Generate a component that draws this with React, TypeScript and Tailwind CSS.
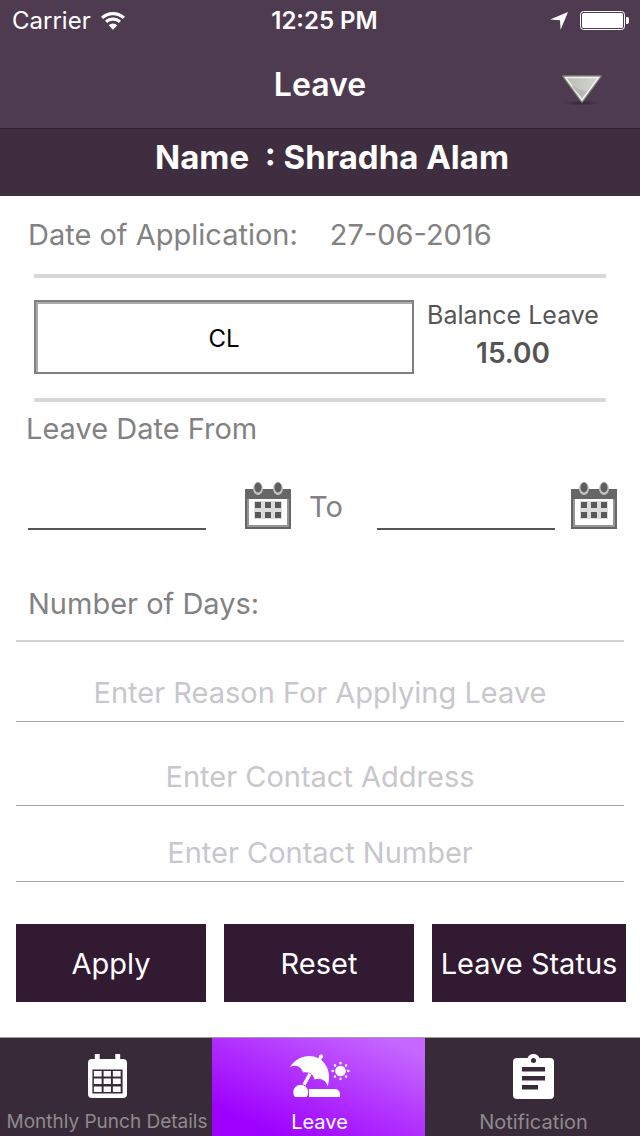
import type { ReactNode } from "react";

function WifiIcon() {
  return (
    <svg width="24" height="20" viewBox="0 0 24 20" aria-hidden="true">
      <path d="M12 1C7.300 1 3.200 2.800 0 5.800l2.200 2.300C4.900 5.600 8.200 4.200 12 4.200s7.100 1.400 9.800 3.900L24 5.800C20.800 2.800 16.700 1 12 1Z" fill="#fff" />
      <path d="M12 6.600c-3.100 0-5.900 1.200-8 3.200l2.200 2.300c1.500-1.500 3.500-2.300 5.800-2.300s4.300.8 5.800 2.300l2.200-2.300c-2.100-2-4.900-3.200-8-3.200Z" fill="#fff" />
      <path d="M12 18.800 7.700 14.300a6.200 6.200 0 0 1 8.600 0Z" fill="#fff" />
    </svg>
  );
}

function LocationIcon() {
  return (
    <svg width="18" height="18" viewBox="0 0 18 18" aria-hidden="true">
      <path d="M18 0 10.600 17.800 10 8.200 0 7.600Z" fill="#fff" />
    </svg>
  );
}

function BatteryIcon() {
  return (
    <svg width="49" height="19" viewBox="0 0 49 19" aria-hidden="true">
      <rect x=".5" y=".5" width="44" height="18" rx="3" fill="none" stroke="#fff" />
      <rect x="2" y="2" width="41" height="15" rx="1.500" fill="#fff" />
      <path d="M46 6h1a2 2 0 0 1 2 2v3a2 2 0 0 1-2 2h-1Z" fill="#fff" />
    </svg>
  );
}

function TriangleIcon() {
  return (
    <svg width="40" height="31" viewBox="0 0 40 31" aria-hidden="true">
      <defs>
        <linearGradient id="tri" x1="0" y1="0" x2="1" y2="0">
          <stop offset="0" stopColor="#b9bab6" />
          <stop offset="1" stopColor="#d6d7d3" />
        </linearGradient>
        <radialGradient id="shade">
          <stop offset="0" stopColor="#281c2a" stopOpacity=".75" />
          <stop offset="1" stopColor="#281c2a" stopOpacity="0" />
        </radialGradient>
      </defs>
      <ellipse cx="20" cy="28" rx="18" ry="2.500" fill="url(#shade)" />
      <path d="M.8 1h38.400L20 27.400Z" fill="url(#tri)" stroke="#7e8179" strokeWidth="1.400" strokeLinejoin="round" />
      <path d="M3.400 2.400h33.200L20 25Z" fill="none" stroke="#f1f2ee" strokeWidth="1.500" />
      <path d="M9 11c6 1 9 5 16 5l-5 7Z" fill="#adaeaa" opacity=".6" />
    </svg>
  );
}

function DatePickIcon() {
  return (
    <svg width="46" height="47" viewBox="0 0 46 47" aria-hidden="true">
      <path d="M0 7h46v40H0Z" fill="#666" />
      <path d="M2 17h42v28H2Z" fill="#959595" />
      <path d="M4 17h38v26H4Z" fill="#fff" />
      <ellipse cx="13" cy="6.500" rx="5" ry="6.500" fill="#c4c4c4" />
      <ellipse cx="33" cy="6.500" rx="5" ry="6.500" fill="#c4c4c4" />
      <ellipse cx="13" cy="5.500" rx="3.500" ry="5" fill="#5e5e5e" />
      <ellipse cx="33" cy="5.500" rx="3.500" ry="5" fill="#5e5e5e" />
      <path d="M9 19h28v18H9Z" fill="#dcdcdc" />
      <path d="M10 20h6v6h-6ZM20 20h6v6h-6ZM30 20h6v6h-6ZM10 30h6v6h-6ZM20 30h6v6h-6ZM30 30h6v6h-6Z" fill="#595959" />
    </svg>
  );
}

function PunchIcon() {
  return (
    <svg width="39" height="44" viewBox="0 0 40 44" preserveAspectRatio="none" aria-hidden="true">
      <path
        fill="#fff"
        fillRule="evenodd"
        d="M7 0h5v5h16V0h5v5h3a4 4 0 0 1 4 4v31a4 4 0 0 1-4 4H4a4 4 0 0 1-4-4V9a4 4 0 0 1 4-4h3ZM4.500 15.500v24h31v-24Z"
      />
      <path
        fill="#fff"
        d="M6 17h8v5.500H6ZM16 17h7.500v5.500H16ZM25.500 17h8v5.500h-8ZM6 24.500h8V30H6ZM16 24.500h7.500V30H16ZM25.500 24.500h8V30h-8ZM6 32.500h8V38H6ZM16 32.500h7.500V38H16ZM25.500 32.500h8V38h-8Z"
      />
    </svg>
  );
}

function BeachIcon() {
  return (
    <svg width="60" height="44" viewBox="0 0 60 44" fill="#fff" aria-hidden="true">
      <path d="M0 13C7 2 20-.5 28 4.200l1-1.500a2 2 0 1 1 2.800 1.600l-.6 1.700C38.500 12 41 22 37.500 32.500c-.5-5-6-9.500-13-7-.4-4.500-5-8.500-11.500-7C11.500 13 6 10 0 13Z" />
      <path d="m18.500 19 3 1.600-6 11-3-1.600Z" />
      <path d="M5 43a7.500 7.500 0 1 1 11.500 0ZM19 35h26a5 5 0 0 1 5 5v3H19Z" />
      <circle cx="50.500" cy="17" r="5.300" />
      <g stroke="#fff" strokeWidth="2.300" strokeLinecap="round">
        <path d="M50.500 9v.4M50.500 24.600v.4M42.500 17h.4M58.100 17h.4M44.800 11.300l.3.300M55.900 22.400l.3.300M56.200 11.300l-.3.300M45.100 22.400l-.3.300" />
      </g>
    </svg>
  );
}

function NoticeIcon() {
  return (
    <svg width="41" height="46" viewBox="0 0 41 46" aria-hidden="true">
      <path
        fill="#fff"
        fillRule="evenodd"
        d="M4 5h10.500a6.500 6.500 0 0 1 12 0H37a4 4 0 0 1 4 4v33a4 4 0 0 1-4 4H4a4 4 0 0 1-4-4V9a4 4 0 0 1 4-4ZM20.500 5a2.500 2.500 0 1 0 0 5 2.500 2.500 0 0 0 0-5ZM9 14v4.500h23V14ZM9 23v4.500h23V23ZM9 32v4.500h16V32Z"
      />
    </svg>
  );
}

function Field({ label, type = "text" }: { label: string; type?: string }) {
  return (
    <input
      type={type}
      aria-label={label}
      placeholder={label}
      className="h-14 w-full border-b border-[#a6a6a6] bg-transparent pb-[2px] text-center text-[29px] text-neutral-700 outline-none placeholder:text-[#c7c7cd]"
    />
  );
}

function DateField({ label }: { label: string }) {
  return (
    <input
      type="text"
      aria-label={label}
      className="h-12 w-full min-w-0 border-b-2 border-[#555] bg-transparent text-[29px] text-neutral-600 outline-none"
    />
  );
}

function DateButton({ label }: { label: string }) {
  return (
    <button type="button" aria-label={label} className="mb-px justify-self-end">
      <DatePickIcon />
    </button>
  );
}

function ActionButton({ children }: { children: string }) {
  return (
    <button type="button" className="h-[78px] whitespace-nowrap bg-[#321a33] pt-[2px] text-[29px] text-white">
      {children}
    </button>
  );
}

type TabProps = { icon: ReactNode; label: string; active?: boolean; compact?: boolean };

function Tab({ icon, label, active = false, compact = false }: TabProps) {
  return (
    <a
      href="#"
      aria-current={active ? "page" : undefined}
      className={`flex min-w-0 flex-col items-center whitespace-nowrap pl-[2px] pt-[15px] leading-6 ${
        compact ? "text-[19px]" : "text-[20px]"
      } ${
        active
          ? "bg-[linear-gradient(to_top_right,#9d00ff_15%,#b02eff_50%,#c566ff_90%)] text-white"
          : "text-[#8e8a8e]"
      }`}
    >
      <span className="flex h-[46px] items-center justify-center">{icon}</span>
      <span className="mt-auto pb-[2px]">{label}</span>
    </a>
  );
}

export default function App() {
  return (
    <div className="flex min-h-screen flex-col bg-white font-['Inter','Noto_Sans',sans-serif]">
      <header className="border-b border-[#2c1f2e] bg-[#4f3b50] text-white">
        <div className="grid h-10 grid-cols-3 items-center pl-3 pr-[11px] pt-px text-2xl">
          <div className="flex items-center gap-[10px]">
            <span>Carrier</span>
            <WifiIcon />
          </div>
          <div className="whitespace-nowrap pl-2 text-center font-semibold">12:25 PM</div>
          <div className="flex items-center justify-end gap-3">
            <LocationIcon />
            <BatteryIcon />
          </div>
        </div>
        <div className="grid h-22 grid-cols-[1fr_auto_1fr] items-center px-[38px]">
          <h1 className="col-start-2 pt-[2px] text-[32px] font-semibold">Leave</h1>
          <button type="button" aria-label="Show menu" className="mt-3 justify-self-end">
            <TriangleIcon />
          </button>
        </div>
      </header>

      <p className="h-[67px] whitespace-pre bg-[#3f2d40] pl-6 pt-1 text-center text-[33px] font-bold leading-[48px] text-white">
        {"Name  : Shradha Alam"}
      </p>

      <main className="flex flex-1 flex-col">
        <dl className="flex h-[78px] items-center gap-8 px-7 text-[29px] text-[#828282]">
          <dt>Date of Application:</dt>
          <dd>27-06-2016</dd>
        </dl>

        <section className="mx-[34px] flex h-32 items-start gap-3 border-y-4 border-[#d7d7d7] pt-[18px]">
          <input
            type="text"
            aria-label="Leave type"
            defaultValue="CL"
            className="mt-1 h-[74px] min-w-0 flex-1 border-2 border-[#808080] pt-[2px] text-center text-2xl text-black shadow-[inset_2px_2px_0_#ababab] outline-none"
          />
          <div className="-mr-[6px] w-[186px] whitespace-nowrap pr-3 text-center text-[#555]">
            <div className="text-[25px] leading-[38px]">Balance Leave</div>
            <div className="text-[28px] font-semibold leading-[38px]">15.00</div>
          </div>
        </section>

        <h2 className="px-[26px] text-[29px] leading-[54px] text-[#828282]">Leave Date From</h2>
        <div className="mt-[26px] grid grid-cols-[1fr_85px_86px_1fr_62px] items-end pl-7 pr-[23px] text-[29px] text-[#828282]">
          <DateField label="From date" />
          <DateButton label="Pick from date" />
          <span className="pl-[18px] leading-[46px]">To</span>
          <DateField label="To date" />
          <DateButton label="Pick to date" />
        </div>

        <div className="mx-4 mt-[38px] flex h-[74px] items-center border-b-2 border-[#d0d0d0] px-3 text-[29px] text-[#828282]">
          Number of Days:
        </div>

        <form className="flex flex-col px-4" onSubmit={(event) => event.preventDefault()}>
          <div className="mt-6 flex flex-col gap-7">
            <Field label="Enter Reason For Applying Leave" />
            <Field label="Enter Contact Address" />
          </div>
          <div className="mt-5">
            <Field label="Enter Contact Number" type="tel" />
          </div>
          <div className="-mr-[2px] mt-[42px] grid grid-cols-[190fr_190fr_194fr] gap-[18px] pb-8">
            <ActionButton>Apply</ActionButton>
            <ActionButton>Reset</ActionButton>
            <ActionButton>Leave Status</ActionButton>
          </div>
        </form>
      </main>

      <nav className="grid h-[99px] grid-cols-[212fr_213fr_215fr] border-t border-[#a09ba0] bg-[#392a39]">
        <Tab icon={<PunchIcon />} label="Monthly Punch Details" compact />
        <Tab icon={<BeachIcon />} label="Leave" active />
        <Tab icon={<NoticeIcon />} label="Notification" />
      </nav>
    </div>
  );
}
